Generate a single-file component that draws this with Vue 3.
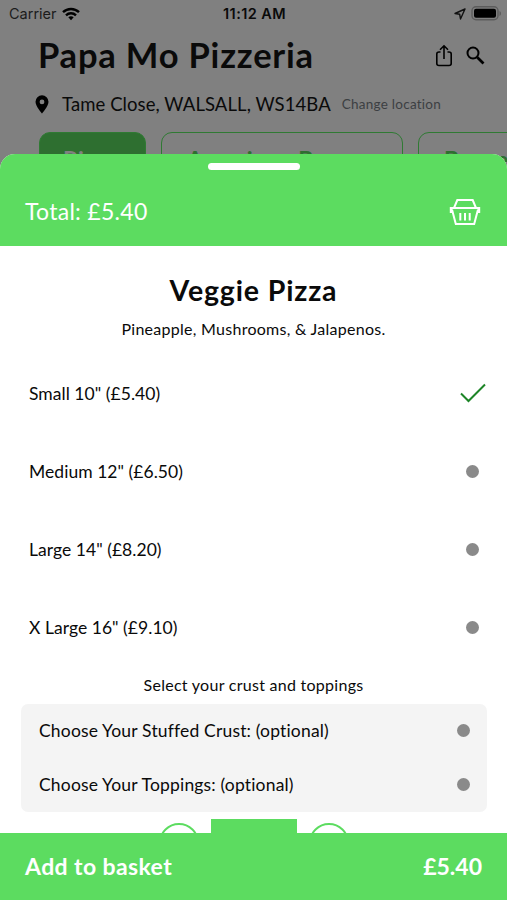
<script setup>
const sizes = [
  { label: 'Small 10" (£5.40)', selected: true },
  { label: 'Medium 12" (£6.50)', selected: false },
  { label: 'Large 14" (£8.20)', selected: false },
  { label: 'X Large 16" (£9.10)', selected: false },
]
const extras = [
  'Choose Your Stuffed Crust: (optional)',
  'Choose Your Toppings: (optional)',
]
</script>

<template>
  <div class="screen">
    <div class="page">
      <div class="status">
        <div class="carrier">
          <span>Carrier</span>
          <svg width="18" height="14" viewBox="0 0 18 14" fill="none" stroke="#000" stroke-width="2.4">
            <path d="M1 5.2C5.5.9 12.5.9 17 5.2" />
            <path d="M4 8.3c2.8-2.7 7.2-2.7 10 0" />
            <path d="M6.3 10.3c1.6-1.5 3.8-1.5 5.4 0L9 13.2z" fill="#000" stroke="none" />
          </svg>
        </div>
        <div class="clock">11:12 AM</div>
        <div class="power">
          <svg width="12" height="12" viewBox="0 0 12 12" fill="none" stroke="#111" stroke-width="1.4" stroke-linejoin="round">
            <path d="M11 1 1 5.5l4.7.8L6.5 11z" />
          </svg>
          <svg width="31" height="15" viewBox="0 0 31 15">
            <rect x="1" y=".8" width="26" height="13" rx="4" fill="none" stroke="#5c5c5c" stroke-width="1.4" />
            <rect x="3" y="2.8" width="22" height="9" rx="2" fill="#000" />
            <path d="M28.5 5v5c2-.8 2-4.2 0-5z" fill="#5c5c5c" />
          </svg>
        </div>
      </div>
      <div class="heading">
        <h1>Papa Mo Pizzeria</h1>
        <svg class="share" width="18" height="24" viewBox="0 0 18 24" fill="none" stroke="#000" stroke-width="1.6">
          <path d="M5.500 8H4Q1.800 8 1.800 10v9.500q0 2 2.200 2h10q2.200 0 2.200-2V10q0-2-2.200-2h-1.500M9 15V2M5 5.800 9 1.800l4 4" />
        </svg>
        <svg width="19" height="19" viewBox="0 0 19 19" fill="none" stroke="#000">
          <circle cx="7" cy="7" r="5.5" stroke-width="2" />
          <path d="m11.2 11.2 6.3 6.3" stroke-width="2.7" />
        </svg>
      </div>
      <div class="address">
        <svg width="14" height="19" viewBox="0 0 14 19">
          <path fill-rule="evenodd" d="M7 .3A6.500 6.500 0 0 0 .5 6.800C.5 11.500 7 18.500 7 18.500s6.500-7 6.500-11.700A6.500 6.500 0 0 0 7 .3zm0 4.200a2.400 2.400 0 1 1 0 4.800 2.400 2.400 0 0 1 0-4.800z" />
        </svg>
        <div class="street">Tame Close, WALSALL, WS14BA</div>
        <div class="change">Change location</div>
      </div>
      <div class="tabs">
        <div class="tab active">Pizzas</div>
        <div class="tab wide">American Burgers</div>
        <div class="tab last">Burgers</div>
      </div>
    </div>

    <div class="sheet">
      <header class="total">
        <div class="grabber"></div>
        <div class="total-row">
          <span class="total-text">Total: £5.40</span>
          <svg width="32" height="28" viewBox="0 0 32 28" fill="none" stroke="#fff" stroke-width="2">
            <path d="M5 10 8.300 2h15.400L27 10M2.800 14H1.800V10h28.400v4h-1M3 11.500 6.800 26h18.400L29 11.500" />
            <path d="M11.300 15v7.500M16 15v7.500M20.700 15v7.500" />
          </svg>
        </div>
      </header>
      <h2>Veggie Pizza</h2>
      <p class="desc">Pineapple, Mushrooms, &amp; Jalapenos.</p>
      <div class="sizes">
        <div v-for="s in sizes" :key="s.label" class="size">
          <span>{{ s.label }}</span>
          <svg v-if="s.selected" width="26" height="20" viewBox="0 0 26 20" fill="none" stroke="#1d8527" stroke-width="2">
            <path d="m1 10.500 7.500 7.500L25 1.500" />
          </svg>
          <i v-else class="dot"></i>
        </div>
      </div>
      <p class="hint">Select your crust and toppings</p>
      <div class="extras">
        <div v-for="label in extras" :key="label" class="extra">
          <span>{{ label }}</span>
          <i class="dot"></i>
        </div>
      </div>
      <div class="stepper">
        <div class="ring"></div>
        <div class="count"></div>
        <div class="ring"></div>
      </div>
      <footer class="basket">
        <span class="add">Add to basket</span>
        <span>£5.40</span>
      </footer>
    </div>
  </div>
</template>

<style>
body { margin: 0; }
</style>

<style scoped>
* { box-sizing: border-box; }
.screen {
  position: relative;
  width: 507px;
  height: 900px;
  overflow: hidden;
  background: #808080;
  font-family: Lato, "Liberation Sans", sans-serif;
  font-variant-ligatures: none;
  color: #0a0a0a;
  white-space: nowrap;
}
h1, h2, p { margin: 0; }
.page { display: flex; flex-direction: column; }
.status {
  display: grid;
  grid-template-columns: 1fr auto 1fr;
  align-items: center;
  height: 27px;
  padding: 0 7px 0 9px;
  font-family: Inter, sans-serif;
  font-size: 14.5px;
}
.carrier { display: flex; align-items: center; gap: 5px; color: #1c1c1c; }
.clock { font-weight: 600; font-size: 14.5px; letter-spacing: 0.4px; }
.power { display: flex; justify-content: flex-end; align-items: center; gap: 5px; margin-right: -2px; }
.heading { display: flex; align-items: center; height: 57px; padding: 0 22px 0 38px; }
h1 { flex: 1; font-size: 34.5px; font-weight: 700; line-height: 55px; height: 57px; letter-spacing: 0.8px; }
.share { margin-right: 13px; }
.address { display: flex; align-items: center; height: 40px; padding-left: 35px; }
.street { margin-left: 13px; font-size: 18.5px; letter-spacing: 0.08px; }
.change { margin-left: 11px; font-size: 13.5px; letter-spacing: 0.25px; color: #3c3f43; }
.tabs { display: flex; gap: 15px; padding: 8px 0 0 39px; }
.tab {
  flex: none;
  height: 50px;
  padding-left: 25px;
  border: 1.5px solid #2f7a33;
  border-radius: 11px;
  font-size: 23px;
  font-weight: 700;
  line-height: 53px;
  letter-spacing: 0.9px;
  color: #2e6f30;
}
.tab.active { width: 107px; background: #2e6f30; color: #808080; padding-left: 23px; }
.tab.wide { width: 242px; }
.tab.last { width: 140px; }
.sheet {
  position: absolute;
  inset: 153.5px 0 0;
  display: flex;
  flex-direction: column;
  overflow: hidden;
  background: #fff;
  border-radius: 15px 15px 0 0;
}
.total { flex: none; height: 92.5px; background: #5cdc60; color: #fff; }
.grabber { width: 92px; height: 7px; margin: 9.5px auto 0; border-radius: 4px; background: #fff; }
.total-row { display: flex; justify-content: space-between; align-items: center; height: 83px; padding: 0 26px 0 25px; }
.total-text { margin-top: -2px; font-size: 23px; letter-spacing: 0.28px; }
h2 { flex: none; height: 66px; padding-top: 12px; font-size: 28.5px; font-weight: 700; line-height: 65px; letter-spacing: 0.85px; text-align: center; }
.desc { flex: none; height: 42px; font-size: 16px; line-height: 33px; letter-spacing: 0.27px; text-align: center; }
.size { display: flex; justify-content: space-between; align-items: center; height: 78.25px; padding: 0 21px 0 29px; font-size: 17.5px; letter-spacing: 0.04px; }
.dot { flex: none; width: 13px; height: 13px; margin-right: 7px; border-radius: 50%; background: #8a8a8a; }
.hint { flex: none; height: 37px; font-size: 16px; line-height: 36px; letter-spacing: 0.27px; text-align: center; }
.extras { flex: none; width: 466px; height: 108px; margin: 0 auto 7px 21px; border-radius: 7px; background: #f4f4f4; }
.extra { display: flex; justify-content: space-between; align-items: center; height: 54px; padding: 0 10px 1px 18px; font-size: 17.5px; letter-spacing: 0.17px; }
.stepper { display: flex; flex: none; justify-content: center; gap: 12px; height: 14px; overflow: hidden; }
.ring { width: 40px; height: 40px; margin-top: 4px; border: 2px solid #5cdc60; border-radius: 50%; }
.count { width: 86px; height: 40px; background: #5cdc60; }
.basket {
  flex: none;
  display: flex;
  justify-content: space-between;
  align-items: center;
  height: 67px;
  padding: 0 25px 2px;
  background: #5cdc60;
  color: #fff;
  font-size: 23px;
  font-weight: 700;
}
.add { letter-spacing: 0.4px; }
</style>
